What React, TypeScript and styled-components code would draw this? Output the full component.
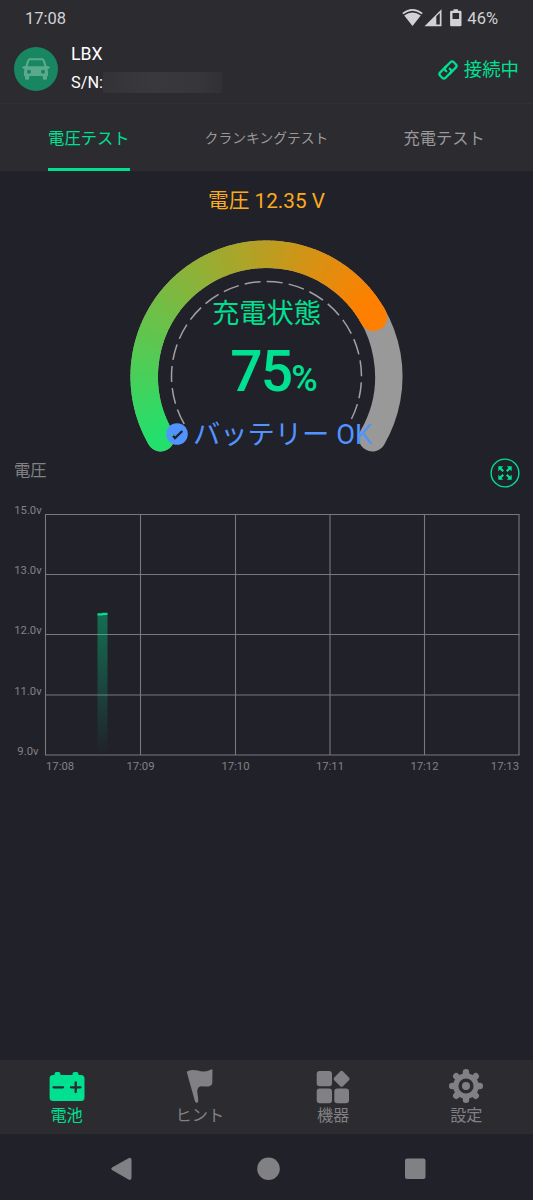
import React from 'react';
import styled, { createGlobalStyle } from 'styled-components';

const c = {
  page: '#212129',
  panel: '#2b2b30',
  green: '#00e091',
  grey: '#99999b',
  muted: '#818185',
  amber: '#fbab1d',
  blue: '#5294ff',
};

const GlobalStyle = createGlobalStyle`
  * { box-sizing: border-box; }
  body {
    margin: 0;
    background: ${c.page};
    font-family: Roboto, 'Noto Sans CJK JP', sans-serif;
  }
`;

const Screen = styled.div`
  width: 533px;
  height: 1200px;
  display: flex;
  flex-direction: column;
  background: ${c.page};
  overflow: hidden;
`;

const StatusBar = styled.div`
  height: 35px;
  padding: 2px 35px 0 25px;
  display: flex;
  align-items: center;
  justify-content: space-between;
  background: ${c.panel};
  color: #d2d2d4;
  font-size: 16.5px;
  line-height: 20px;
`;

const StatusIcons = styled.div`
  display: flex;
  align-items: center;
  gap: 5px;
  svg { margin-top: -2px; }
`;

const Header = styled.header`
  height: 69px;
  padding: 0 14px;
  display: flex;
  align-items: center;
  background: ${c.panel};
  border-bottom: 1px solid #303035;
`;

const Avatar = styled.div`
  width: 44px;
  height: 44px;
  border-radius: 50%;
  background: #188660;
  display: grid;
  place-items: center;
`;

const Device = styled.div`
  flex: 1;
  margin-left: 13px;
  color: #fff;
`;

const DeviceName = styled.div`
  font-size: 17.6px;
  line-height: 24px;
`;

const Serial = styled.div`
  display: flex;
  align-items: center;
  margin: 6px 0 3px;
  height: 22px;
  font-size: 16.3px;
`;

const Hidden = styled.span`
  width: 119px;
  height: 21px;
  background: linear-gradient(90deg, #333338, #39393d 40%, #37373b 80%, #303035);
`;

const Connection = styled.div`
  display: flex;
  align-items: center;
  gap: 6px;
  color: ${c.green};
  font-size: 18.4px;
  line-height: 24px;
  padding-top: 2px;
  svg { margin-top: -1px; }
`;

const Tabs = styled.nav`
  height: 67px;
  display: grid;
  grid-template-columns: repeat(3, 1fr);
  justify-items: center;
  background: ${c.panel};
`;

const Tab = styled.div<{ $active?: boolean; $small?: boolean }>`
  display: flex;
  align-items: center;
  height: 67px;
  padding-top: 1px;
  white-space: nowrap;
  font-size: ${(p) => (p.$small ? 13.8 : 16.3)}px;
  color: ${(p) => (p.$active ? c.green : c.grey)};
  border-bottom: 3px solid ${(p) => (p.$active ? c.green : 'transparent')};
`;

const Voltage = styled.div`
  height: 58px;
  line-height: 61px;
  text-align: center;
  color: ${c.amber};
  font-size: 20.7px;
`;

const GaugeArea = styled.section`
  position: relative;
  height: 226px;
  svg { display: block; }
`;

const Readout = styled.div`
  position: absolute;
  inset: 0;
  display: flex;
  flex-direction: column;
  align-items: center;
  color: ${c.green};
`;

const ChargeLabel = styled.div`
  font-size: 27.3px;
  line-height: 36px;
  margin-top: 67px;
`;

const Percent = styled.div`
  height: 60px;
  line-height: 60px;
  margin: 10px 0 0 15px;
  font-size: 57px;
  font-weight: 500;
  letter-spacing: -2px;
  span { font-size: 36px; letter-spacing: 0; }
`;

const Verdict = styled.div`
  display: flex;
  align-items: center;
  gap: 5px;
  margin-top: 15px;
  margin-left: 5px;
  line-height: 36px;
  font-size: 27.3px;
  color: ${c.blue};
  white-space: nowrap;
  svg { margin-top: -2px; }
`;

const ChartHeader = styled.div`
  height: 38px;
  padding: 0 13px 0 14px;
  display: flex;
  align-items: center;
  justify-content: space-between;
  color: ${c.muted};
  font-size: 16.3px;
  line-height: 24px;
  span { margin-top: -7px; }
  svg { margin-top: -2px; }
`;

const ChartArea = styled.section`
  flex: 1;
  padding-top: 1px;
  text { font-size: 11.3px; fill: ${c.muted}; }
`;

const BottomNav = styled.nav`
  height: 74px;
  display: grid;
  grid-template-columns: repeat(4, 1fr);
  background: ${c.panel};
`;

const NavItem = styled.div<{ $active?: boolean }>`
  display: flex;
  flex-direction: column;
  align-items: center;
  padding-top: 9px;
  font-size: 16.2px;
  line-height: 22px;
  color: ${(p) => (p.$active ? c.green : c.muted)};
  svg { margin-top: -1px; margin-bottom: 1px; }
`;

const SystemBar = styled.div`
  height: 66px;
  svg { display: block; }
`;

const CX = 266.5;
const CY = 147.5;
const R = 122.3;
const at = (deg: number, r: number) => {
  const a = (deg * Math.PI) / 180;
  return `${(CX + r * Math.cos(a)).toFixed(2)} ${(CY + r * Math.sin(a)).toFixed(2)}`;
};
const arc = (from: number, to: number, r: number) =>
  `M${at(from, r)}A${r} ${r} 0 ${to - from > 180 ? 1 : 0} 1 ${at(to, r)}`;
const mix = (t: number) => {
  const a = [35, 224, 108];
  const b = [255, 128, 0];
  return `rgb(${a.map((v, i) => Math.round(v + (b[i] - v) * t)).join(',')})`;
};

function Gauge() {
  const start = 150;
  const sweep = 181;
  const steps = Array.from({ length: 90 }, (_, i) => i);
  return (
    <svg width="533" height="226" fill="none">
      <path d={arc(150, 390, R)} stroke="#999" strokeWidth="27.5" strokeLinecap="round" />
      <path d={arc(start, start + 1, R)} stroke={mix(0)} strokeWidth="27.5" strokeLinecap="round" />
      <path d={arc(start + sweep - 1, start + sweep, R)} stroke={mix(1)} strokeWidth="27.5" strokeLinecap="round" />
      {steps.map((i) => {
        const s = start + (i * sweep) / 90;
        const e = Math.min(start + sweep, s + sweep / 90 + 0.5);
        return <path key={i} d={arc(s, e, R)} stroke={mix(Math.min(1, i / 86))} strokeWidth="27.5" />;
      })}
      <path d={arc(150, 390, 95)} stroke="#a2a2a4" strokeWidth="1.5" strokeDasharray="16 6.1" />
    </svg>
  );
}

const xs = [45.5, 140.5, 235.5, 330, 424.5, 519];
const ys = [20.5, 80.5, 140.5, 201, 261];
const volts = ['15.0v', '13.0v', '12.0v', '11.0v', '9.0v'];

function Chart() {
  return (
    <svg width="533" height="290" fill="none">
      <defs>
        <linearGradient id="bar" x1="0" y1="0" x2="0" y2="1">
          <stop offset="0" stopColor="#00e091" stopOpacity=".4" />
          <stop offset="1" stopColor="#00e091" stopOpacity="0" />
        </linearGradient>
      </defs>
      <g stroke="#79797d" strokeWidth="1.1">
        {ys.map((y) => <path key={y} d={`M45 ${y}H519.5`} />)}
        {xs.map((x) => <path key={x} d={`M${x} 20.5V261`} />)}
      </g>
      <rect x="97.5" y="120" width="10" height="141" fill="url(#bar)" />
      <path d="M97.5 120.4H102L103.5 119.8H107.5" stroke={c.green} strokeWidth="2.3" />
      {volts.map((v, i) => (
        <text key={v} x={i === 4 ? 38.5 : 41.7} y={ys[i] - 0.5} textAnchor="end">{v}</text>
      ))}
      {xs.map((x, i) => (
        <text key={x} x={i === 0 ? 46 : x} y="276" textAnchor={i === 0 ? 'start' : i === 5 ? 'end' : 'middle'}>
          {`17:${String(8 + i).padStart(2, '0')}`}
        </text>
      ))}
    </svg>
  );
}

const CarIcon = () => (
  <svg width="28" height="22" viewBox="0 0 28 22" fill="#5baa8d">
    <path fillRule="evenodd" d="M8 .3h12q2 0 2.700 2l1.900 5.800 2.600.3q1.200 1 0 2l-1.700.5.5 2v5h-1v2.400q0 1.500-1.500 1.500h-1.200q-1.500 0-1.500-1.500v-2.400H7.200v2.400q0 1.500-1.500 1.500H4.500q-1.500 0-1.500-1.500v-2.400H2v-5l.5-2-1.700-.5q-1.200-1 0-2l2.600-.3 1.900-5.800Q6 .3 8 .3zM8.400 2.200q-1 0-1.300 1L5.600 8.200h16.800L20.900 3.200q-.3-1-1.300-1zM7 11.700a2 2 0 1 0 .01 0zM21 11.700a2 2 0 1 0 .01 0z" />
  </svg>
);

const LinkIcon = () => (
  <svg width="20" height="20" viewBox="0 0 20 20" fill="none" stroke={c.green} strokeWidth="2.300" strokeLinecap="round">
    <g transform="rotate(-45 10 10)">
      <path d="M11 6.200H2.800Q.4 6.200.4 8.600V11.400Q.4 13.800 2.800 13.800H9.700Q12.100 13.800 12.100 11.400V10.400" />
      <path d="M9 13.800H17.200Q19.600 13.800 19.600 11.400V8.600Q19.600 6.200 17.200 6.200H10.300Q7.900 6.200 7.900 8.600V9.600" />
    </g>
  </svg>
);

const BatteryIcon = () => (
  <svg width="36" height="36" viewBox="0 0 36 36">
    <path fill={c.green} d="M5.500 7V6q0-2 2-2h2q2 0 2 2v1h12V6q0-2 2-2h2q2 0 2 2v1H32q3.500 0 3.500 3.500v19Q35.500 33 32 33H4Q.6 33 .6 29.500v-19Q.6 7 4 7z" />
    <path d="M4.500 19.300h9.500M22 19.300h9.500M26.700 14.500v9.500" stroke={c.panel} strokeWidth="2.300" strokeLinecap="round" />
  </svg>
);

const FlagIcon = () => (
  <svg width="36" height="36" viewBox="0 0 36 36" fill={c.muted}>
    <path d="M5.500 3.300Q10 1 16 2.600 22 4.800 28 2q2.500-1.400 2.500 0L30.300 15.200q-.2 1.300-1.500 2.200-2.400 1.700-7.500 1-5.500-.6-6.100 4.300l1 8.800q.4 3-1.300 3.200-1.500.3-2-1.600L5 5q-.2-1.100.5-1.700z" />
  </svg>
);

const ModulesIcon = () => (
  <svg width="36" height="36" viewBox="0 0 36 36" fill={c.muted}>
    <rect x="1.700" y="3" width="15.300" height="15.200" rx="3" />
    <rect x="1.700" y="20.500" width="15.300" height="14.700" rx="3" />
    <rect x="19.300" y="20.500" width="14.700" height="14.700" rx="3" />
    <rect x="20.400" y="4.600" width="12.400" height="12.400" rx="2" transform="rotate(45 26.600 10.800)" />
  </svg>
);

const GearIcon = () => (
  <svg width="36" height="36" viewBox="0 0 36 36">
    <g stroke={c.muted} strokeWidth="6.400" strokeLinecap="round">
      {[0, 45, 90, 135].map((a) => (
        <path key={a} d="M18 4.200V31.800" transform={`rotate(${a} 18 18)`} />
      ))}
    </g>
    <circle cx="18" cy="18" r="12.800" fill={c.muted} />
    <circle cx="18" cy="18" r="5.800" fill="none" stroke={c.panel} strokeWidth="3.600" />
  </svg>
);

export default function App() {
  return (
    <Screen>
      <GlobalStyle />
      <StatusBar>
        <span>17:08</span>
        <StatusIcons>
          <svg width="60" height="20" viewBox="0 0 60 20" fill="#d2d2d4">
            <path d="M.8 5.600Q10.500-2 20.200 5.600" fill="none" stroke="#d2d2d4" strokeWidth="1.700" />
            <path d="M2.200 7.600Q10.500 1.300 18.800 7.600L10.500 18z" />
            <path fillRule="evenodd" d="M22.500 18.300 39.500 1.300v17zM34.300 8.200V16.600H37.800V4.900z" />
            <path fillRule="evenodd" d="M51.500 1.200h4.500v1.600h2.300q1.200 0 1.200 1.200v13.100q0 1.200-1.200 1.200h-9q-1.200 0-1.200-1.200V4q0-1.200 1.200-1.200h2.200zM50.500 5v6h6.600V5z" />
          </svg>
          <span>46%</span>
        </StatusIcons>
      </StatusBar>
      <Header>
        <Avatar><CarIcon /></Avatar>
        <Device>
          <DeviceName>LBX</DeviceName>
          <Serial>S/N:<Hidden /></Serial>
        </Device>
        <Connection><LinkIcon />接続中</Connection>
      </Header>
      <Tabs>
        <Tab $active>電圧テスト</Tab>
        <Tab $small>クランキングテスト</Tab>
        <Tab>充電テスト</Tab>
      </Tabs>
      <Voltage>電圧 12.35 V</Voltage>
      <GaugeArea>
        <Gauge />
        <Readout>
          <ChargeLabel>充電状態</ChargeLabel>
          <Percent>75<span>%</span></Percent>
          <Verdict>
            <svg width="22" height="22" viewBox="0 0 22 22" fill="none">
              <circle cx="11" cy="11" r="10.800" fill={c.blue} />
              <path d="m6.300 12 2.700 3 7.300-7" stroke={c.page} strokeWidth="2.300" />
              <path d="m5.500 11.300 1.600 1.700" stroke="#27df6a" strokeWidth="1.800" />
            </svg>
            <span>バッテリー OK</span>
          </Verdict>
        </Readout>
      </GaugeArea>
      <ChartHeader>
        <span>電圧</span>
        <svg width="30" height="30" viewBox="0 0 30 30" fill="none">
          <circle cx="15" cy="15" r="13.900" stroke={c.green} strokeWidth="1.400" />
          {[0, 90, 180, 270].map((a) => (
            <g key={a} transform={`rotate(${a} 15 15)`}>
              <path d="M8.300 8.300h4.900l-4.900 4.900z" fill={c.green} />
              <path d="m10 10 3.200 3.200" stroke={c.green} strokeWidth="2.200" />
            </g>
          ))}
        </svg>
      </ChartHeader>
      <ChartArea><Chart /></ChartArea>
      <BottomNav>
        <NavItem $active><BatteryIcon />電池</NavItem>
        <NavItem><FlagIcon />ヒント</NavItem>
        <NavItem><ModulesIcon />機器</NavItem>
        <NavItem><GearIcon />設定</NavItem>
      </BottomNav>
      <SystemBar>
        <svg width="533" height="66" fill={c.muted}>
          <path d="M112 33.500 128.500 24.200Q131.500 23 131.500 26V43.500Q131.500 47 128.500 45.500L112 36Q110.300 34.800 112 33.500z" />
          <circle cx="268.500" cy="34.800" r="11.300" />
          <rect x="405" y="24.500" width="20.500" height="20.500" rx="2" />
        </svg>
      </SystemBar>
    </Screen>
  );
}
